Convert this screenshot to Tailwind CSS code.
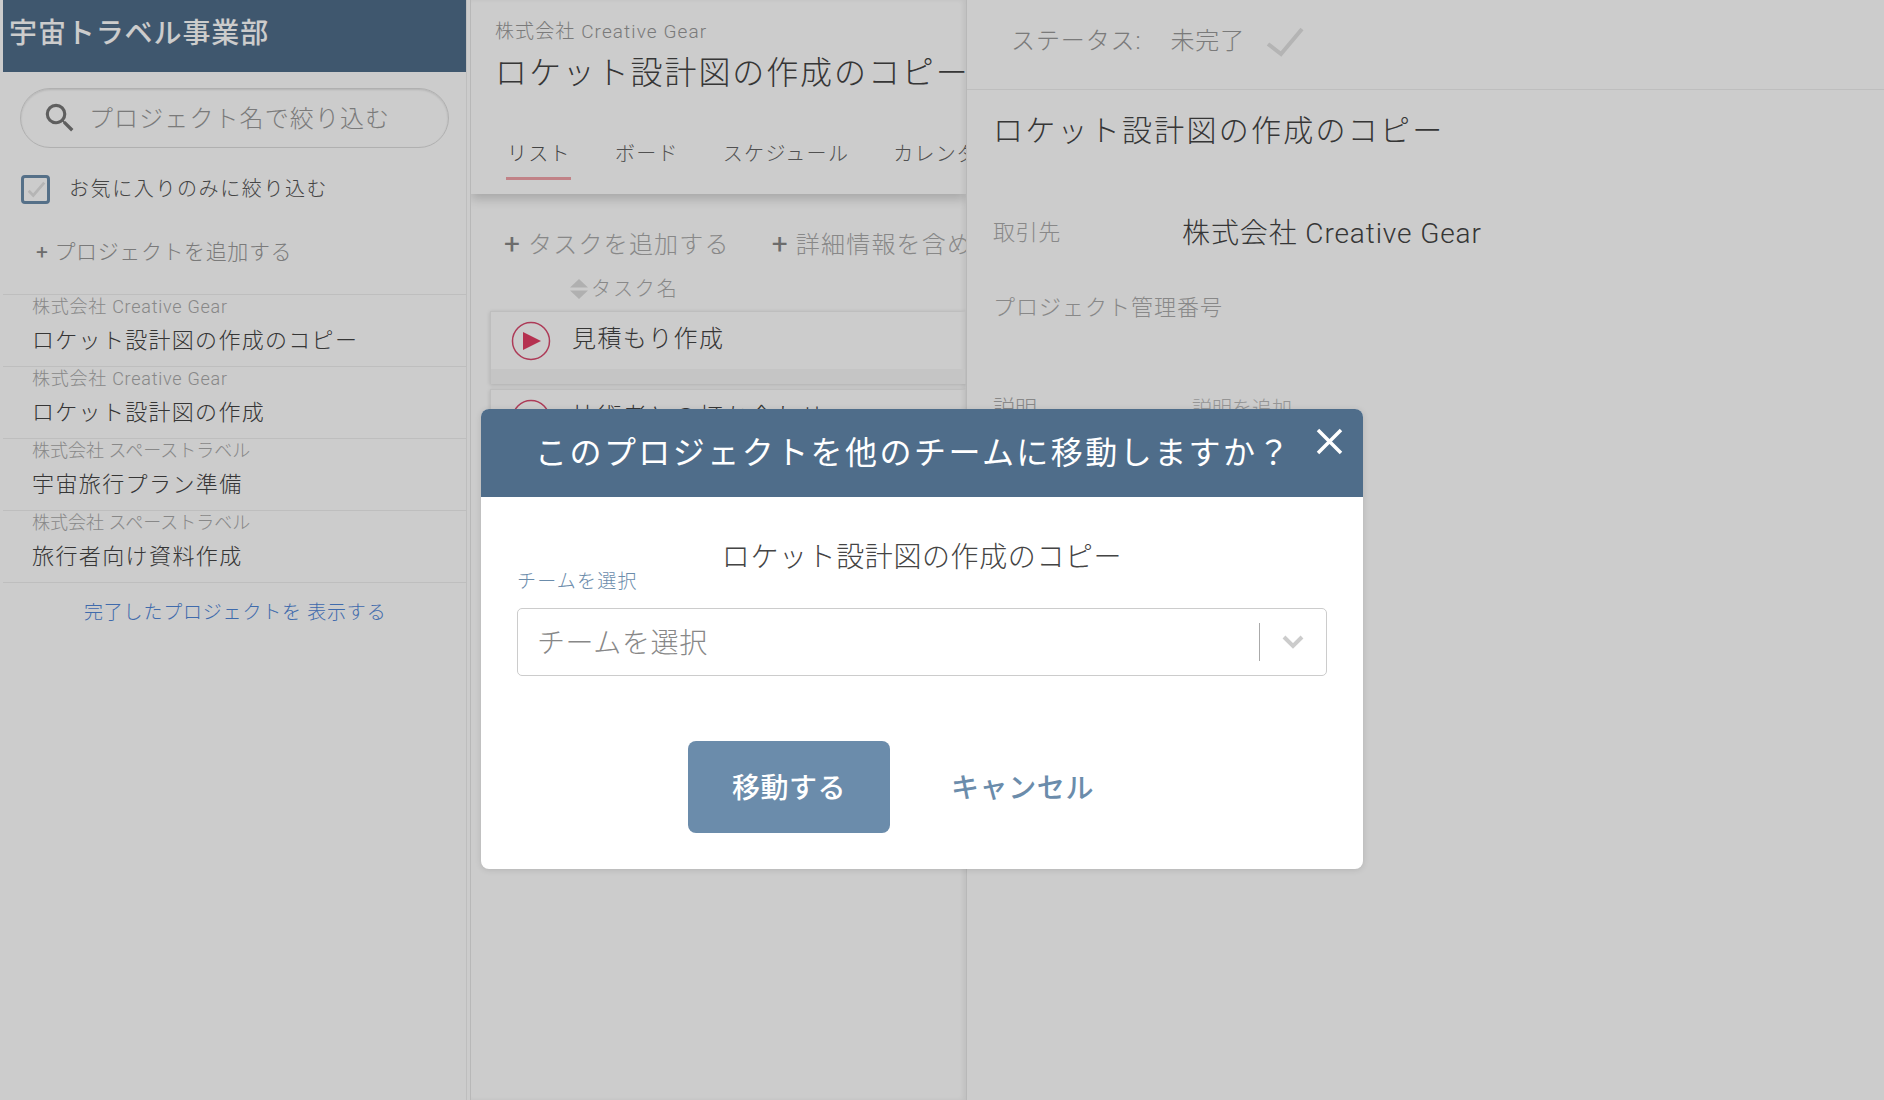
<!DOCTYPE html>
<html lang="ja">
<head>
  <meta charset="UTF-8">
  <title>プロジェクトの移動</title>
  <script src="https://cdn.jsdelivr.net/npm/@tailwindcss/browser@4"></script>
</head>
<body class="font-['Roboto','Noto_Sans_CJK_JP',sans-serif] font-light text-[#444]">
<div class="relative flex h-[1100px] w-[1884px] overflow-hidden bg-white">

  <!-- Sidebar -->
  <aside class="ml-[3px] w-[464px] shrink-0 border-r-[1px] border-[#eee]">
    <div class="h-[72px] bg-[#4f6d8a] pl-[6px] pt-[14px] text-[28px] leading-[40px] font-medium tracking-[0.9px] text-white">宇宙トラベル事業部</div>
    <div class="mx-[17px] mt-[16px] flex h-[60px] items-center rounded-full border border-[#ddd] pl-[20px] shadow-[inset_0_1px_2px_rgba(0,0,0,0.12)]">
      <svg class="size-[38px] shrink-0" viewBox="0 0 24 24" fill="#777"><path d="M15.5 14h-.79l-.28-.27A6.47 6.47 0 0 0 16 9.5 6.5 6.5 0 1 0 9.5 16c1.61 0 3.09-.59 4.23-1.57l.27.28v.79l5 4.99L20.49 19l-4.99-5zm-6 0C7.01 14 5 11.99 5 9.5S7.01 5 9.5 5 14 7.01 14 9.5 11.99 14 9.5 14z"/></svg>
      <span class="ml-[10px] mt-[1px] text-[24px] tracking-[1.1px] text-[#999]">プロジェクト名で絞り込む</span>
    </div>
    <label class="ml-[18px] mt-[26px] flex h-[30px] items-center">
      <span class="flex size-[29px] items-center justify-center rounded-[4px] border-[3px] border-[#6b8cab]">
        <svg class="size-[22px]" viewBox="0 0 24 24" fill="none" stroke="#e3e3e3" stroke-width="3"><path d="M4 14l5 5L21 5"/></svg>
      </span>
      <span class="ml-[19px] text-[20px] tracking-[1.6px] text-[#555]">お気に入りのみに絞り込む</span>
    </label>
    <div class="ml-[33px] mt-[34px] flex h-[30px] items-center text-[21px] tracking-[0.6px] text-[#999]"><span class="mr-[6px] font-normal text-[#888]">+</span>プロジェクトを追加する</div>
    <ul class="mt-[26px] border-b border-[#eee]">
      <li class="h-[72px] border-t border-[#eee] pl-[29px]">
        <p class="text-[18px] leading-[24px] tracking-[0.75px] text-[#aaa]">株式会社 Creative Gear</p>
        <p class="mt-[6px] text-[22px] leading-[32px] tracking-[1.3px]">ロケット設計図の作成のコピー</p>
      </li>
      <li class="h-[72px] border-t border-[#eee] pl-[29px]">
        <p class="text-[18px] leading-[24px] tracking-[0.75px] text-[#aaa]">株式会社 Creative Gear</p>
        <p class="mt-[6px] text-[22px] leading-[32px] tracking-[1.3px]">ロケット設計図の作成</p>
      </li>
      <li class="h-[72px] border-t border-[#eee] pl-[29px]">
        <p class="text-[18px] leading-[24px] text-[#aaa]">株式会社 スペーストラベル</p>
        <p class="mt-[6px] text-[22px] leading-[32px] tracking-[1.4px]">宇宙旅行プラン準備</p>
      </li>
      <li class="h-[72px] border-t border-[#eee] pl-[29px]">
        <p class="text-[18px] leading-[24px] text-[#aaa]">株式会社 スペーストラベル</p>
        <p class="mt-[6px] text-[22px] leading-[32px] tracking-[1.4px]">旅行者向け資料作成</p>
      </li>
    </ul>
    <p class="mt-[17px] pl-[81px] text-[19px] leading-[26px] tracking-[0.8px] text-[#4f86d8]">完了したプロジェクトを 表示する</p>
  </aside>

  <!-- Task list panel -->
  <main class="ml-[3px] w-[496px] shrink-0 overflow-hidden border-l border-[#e6e6e6] shadow-[inset_-3px_0_4px_rgba(0,0,0,0.06)]">
    <header class="h-[194px] overflow-hidden whitespace-nowrap pl-[24px] pt-[20px] shadow-[0_5px_10px_rgba(0,0,0,0.18)]">
      <p class="text-[19px] leading-[24px] tracking-[1.1px] text-[#999]">株式会社 Creative Gear</p>
      <h1 class="mt-[8px] text-[32px] leading-[42px] tracking-[1.9px]">ロケット設計図の作成のコピー</h1>
      <nav class="mt-[45px] flex gap-[44px] text-[20px] leading-[30px] tracking-[1.3px] text-[#666]">
        <span class="relative ml-[12px] text-[#555]">リスト<span class="absolute -bottom-[11px] -left-[1px] right-0 h-[3px] bg-[#f2a3a9]"></span></span>
        <span>ボード</span>
        <span>スケジュール</span>
        <span>カレンダー</span>
      </nav>
    </header>
    <div class="flex mt-[32px] ml-[33px] gap-[42px] whitespace-nowrap text-[24px] leading-[36px] tracking-[1.2px] text-[#aaa]">
      <span><span class="mr-[7px] text-[28px] font-normal text-[#888]">+</span>タスクを追加する</span>
      <span><span class="mr-[7px] text-[28px] font-normal text-[#888]">+</span>詳細情報を含めて追加する</span>
    </div>
    <div class="ml-[98px] mt-[11px] flex h-[30px] items-center text-[20px] tracking-[1.9px] text-[#aaa]">
      <svg class="mr-[2px] h-[20px] w-[20px]" viewBox="0 0 20 20" fill="#ddd"><path d="M10 0l9 8.5H1zM10 20l9-8.5H1z"/></svg>タスク名
    </div>
    <div class="ml-[19px] mt-[7px] h-[73px] border border-[#eee] shadow-[0_1px_4px_rgba(0,0,0,0.15)]">
      <div class="flex h-[57px] items-center pl-[20px]">
        <svg class="size-[40px] shrink-0" viewBox="0 0 40 40"><circle cx="20" cy="20" r="18.5" fill="none" stroke="#d94a6e" stroke-width="1.5"/><path d="M12 11l18 9-18 9z" fill="#e33e64"/></svg>
        <span class="ml-[21px] -mt-[4px] text-[24px] tracking-[1.4px]">見積もり作成</span>
      </div>
      <div class="h-[15px] bg-[#f7f7f7]"></div>
    </div>
    <div class="ml-[19px] mt-[5px] h-[73px] border border-[#eee] shadow-[0_1px_4px_rgba(0,0,0,0.15)]">
      <div class="flex h-[57px] items-center pl-[20px]">
        <svg class="size-[40px] shrink-0" viewBox="0 0 40 40"><circle cx="20" cy="20" r="18.5" fill="none" stroke="#d94a6e" stroke-width="1.5"/><path d="M12 11l18 9-18 9z" fill="#e33e64"/></svg>
        <span class="ml-[21px] -mt-[4px] text-[24px] tracking-[1.4px]">技術者との打ち合わせ</span>
      </div>
    </div>
  </main>

  <!-- Detail panel -->
  <section class="flex-1 border-l border-[#e6e6e6]">
    <div class="flex h-[90px] items-center border-b border-[#eee] pb-[8px] pl-[44px] text-[24px] tracking-[0.9px] text-[#999]">
      ステータス:<span class="ml-[29px]">未完了</span>
      <svg class="ml-[21px] mt-[2px] h-[30px] w-[38px]" viewBox="0 0 38 30" fill="none" stroke="#e2e2e2" stroke-width="4"><path d="M2 17l13 10L36 2"/></svg>
    </div>
    <h2 class="ml-[26px] mt-[19px] text-[30px] leading-[44px] tracking-[2.25px]">ロケット設計図の作成のコピー</h2>
    <div class="ml-[26px] mt-[59px] flex items-center">
      <span class="-mt-[2px] w-[189px] text-[22px] tracking-[0.6px] text-[#aaa]">取引先</span>
      <span class="mt-[2px] text-[28px] leading-[40px] tracking-[0.9px]">株式会社 Creative Gear</span>
    </div>
    <p class="ml-[26px] mt-[38px] text-[22px] leading-[32px] tracking-[1px] text-[#aaa]">プロジェクト管理番号</p>
    <div class="ml-[26px] mt-[68px] flex items-center text-[#aaa]">
      <span class="w-[199px] text-[22px]">説明</span>
      <span class="text-[20px] text-[#bbb]">説明を追加</span>
    </div>
  </section>

  <!-- Overlay -->
  <div class="absolute inset-0 bg-black/20"></div>

  <!-- Modal -->
  <div class="absolute left-[481px] top-[409px] w-[882px] overflow-hidden rounded-[8px] bg-white shadow-[0_1px_6px_rgba(0,0,0,0.12)]">
    <div class="relative h-[88px] bg-[#4f6d8a] pl-[54px] pt-[20px] text-[32px] leading-[48px] font-normal tracking-[2.45px] text-white">
      このプロジェクトを他のチームに移動しますか？
      <svg class="absolute right-[20px] top-[19px] size-[27px]" viewBox="0 0 27 27" stroke="#fff" stroke-width="3.5"><path d="M2 2l23 23M25 2L2 25"/></svg>
    </div>
    <div class="relative px-[36px] pb-[36px] pt-[41px]">
      <p class="text-center text-[28px] leading-[40px] tracking-[0.6px]">ロケット設計図の作成のコピー</p>
      <p class="-mt-[9px] text-[19px] leading-[26px] tracking-[1.2px] text-[#6b8cab]">チームを選択</p>
      <div class="mt-[13px] flex h-[68px] items-center rounded-[5px] border border-[#ccc] pl-[19px] pr-[22px]">
        <span class="mt-[3px] flex-1 text-[28px] tracking-[0.6px] text-[#888]">チームを選択</span>
        <span class="h-[38px] w-px bg-[#aaa]"></span>
        <svg class="ml-[22px] h-[14px] w-[22px]" viewBox="0 0 22 14" fill="none" stroke="#ccc" stroke-width="4"><path d="M2 2l9 9 9-9"/></svg>
      </div>
      <div class="mt-[65px] flex items-center pl-[171px]">
        <button class="h-[92px] w-[202px] rounded-[8px] bg-[#6b8cab] pt-[3px] text-[28px] font-medium tracking-[0.5px] text-white">移動する</button>
        <button class="ml-[61px] pt-[3px] text-[28px] font-medium tracking-[0.6px] text-[#6b8cab]">キャンセル</button>
      </div>
    </div>
  </div>
</div>
</body>
</html>
